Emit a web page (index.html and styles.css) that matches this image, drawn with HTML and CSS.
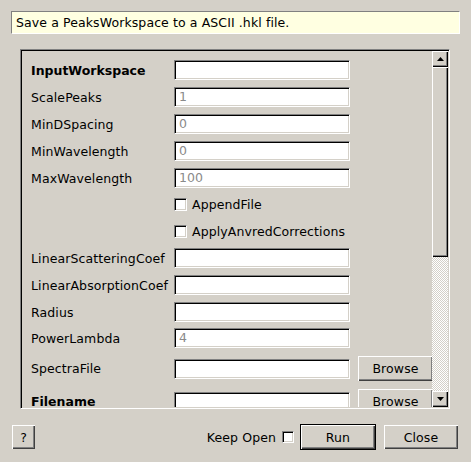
FILE: index.html
```html
<!DOCTYPE html>
<html>
<head>
<meta charset="utf-8">
<link rel="stylesheet" href="styles.css">
</head>
<body>
<div class="dialog">
  <div class="desc">Save a PeaksWorkspace to a ASCII .hkl file.</div>
  <div class="scrollframe">
    <div class="viewport">
      <div class="form">
        <div class="row"><div class="lbl bold">InputWorkspace</div><div class="input"></div></div>
        <div class="row"><div class="lbl">ScalePeaks</div><div class="input">1</div></div>
        <div class="row"><div class="lbl">MinDSpacing</div><div class="input">0</div></div>
        <div class="row"><div class="lbl">MinWavelength</div><div class="input">0</div></div>
        <div class="row"><div class="lbl">MaxWavelength</div><div class="input">100</div></div>
        <div class="row check g6"><div class="cb"></div><span class="cbtext">AppendFile</span></div>
        <div class="row check"><div class="cb"></div><span class="cbtext">ApplyAnvredCorrections</span></div>
        <div class="row"><div class="lbl">LinearScatteringCoef</div><div class="input"></div></div>
        <div class="row"><div class="lbl">LinearAbsorptionCoef</div><div class="input"></div></div>
        <div class="row"><div class="lbl">Radius</div><div class="input"></div></div>
        <div class="row g6"><div class="lbl">PowerLambda</div><div class="input">4</div></div>
        <div class="row tall g8"><div class="lbl">SpectraFile</div><div class="input"></div><div class="btn browse">Browse</div></div>
        <div class="row tall g8"><div class="lbl bold">Filename</div><div class="input"></div><div class="btn browse">Browse</div></div>
      </div>
    </div>
    <div class="vscroll">
      <div class="sbtn"><svg width="7" height="4" viewBox="0 0 7 4"><polygon points="0,4 3.5,0 7,4" fill="#000"/></svg></div>
      <div class="thumb"></div>
      <div class="trough"></div>
      <div class="sbtn"><svg width="7" height="4" viewBox="0 0 7 4"><polygon points="0,0 7,0 3.5,4" fill="#000"/></svg></div>
    </div>
  </div>
  <div class="bottombar">
    <div class="btn help">?</div>
    <div class="spacer"></div>
    <span class="keep">Keep Open</span>
    <div class="cb small"></div>
    <div class="btn run">Run</div>
    <div class="btn close">Close</div>
  </div>
</div>
</body>
</html>
```
FILE: styles.css
```css
body {
  margin: 0;
  background: #d4d0c8;
  font-family: "DejaVu Sans", sans-serif;
  font-size: 12.5px;
  letter-spacing: 0.1px;
  color: #000;
}
.dialog {
  width: 471px;
  height: 462px;
  box-sizing: border-box;
  padding: 11px 11px 0 11px;
  overflow: hidden;
}
.desc {
  height: 23px;
  box-sizing: border-box;
  background: #ffffe1;
  border-top: 1px solid #808080;
  border-left: 1px solid #808080;
  border-right: 1px solid #fff;
  border-bottom: 1px solid #fff;
  padding-left: 4px;
  line-height: 21px;
  white-space: nowrap;
}
.scrollframe {
  margin: 15px 0 0 9px;
  width: 430px;
  height: 360px;
  box-sizing: border-box;
  display: flex;
  border-top: 1px solid #808080;
  border-left: 1px solid #808080;
  border-right: 1px solid #fff;
  border-bottom: 1px solid #fff;
  box-shadow: inset 1px 1px #000, inset -1px -1px #d4d0c8;
  padding: 1px;
}
.viewport {
  flex: 1;
  overflow: hidden;
}
.form {
  padding: 9px 0 0 9px;
}
.row {
  display: flex;
  align-items: center;
  height: 20px;
  margin-top: 7px;
}
.row:first-child { margin-top: 0; }
.row.g6 { margin-top: 6px; }
.row.g8 { margin-top: 8px; }
.row.tall { height: 25px; }
.row.check { padding-left: 143px; }
.lbl {
  width: 143px;
  flex: none;
  white-space: nowrap;
}
.bold { font-weight: bold; letter-spacing: 0; }
.input {
  width: 176px;
  height: 20px;
  flex: none;
  box-sizing: border-box;
  background: #fff;
  border-top: 1px solid #808080;
  border-left: 1px solid #808080;
  border-right: 1px solid #fff;
  border-bottom: 1px solid #fff;
  box-shadow: inset 1px 1px #000, inset -1px -1px #d4d0c8;
  padding-left: 4px;
  line-height: 18px;
  color: #8a8a8a;
}
.cb {
  width: 13px;
  height: 13px;
  flex: none;
  box-sizing: border-box;
  background: #fff;
  border-top: 1px solid #808080;
  border-left: 1px solid #808080;
  border-right: 1px solid #fff;
  border-bottom: 1px solid #fff;
  box-shadow: inset 1px 1px #000, inset -1px -1px #d4d0c8;
}
.cb.small { width: 12px; height: 12px; }
.cbtext { margin-left: 5px; white-space: nowrap; }
.btn {
  box-sizing: border-box;
  background: #d4d0c8;
  box-shadow: inset 1px 1px #fff, inset -1px -1px #404040, inset -2px -2px #808080;
  display: flex;
  align-items: center;
  justify-content: center;
  flex: none;
}
.browse {
  width: 75px;
  height: 25px;
  margin-left: 8px;
}
.vscroll {
  width: 16px;
  display: flex;
  flex-direction: column;
}
.sbtn {
  height: 16px;
  flex: none;
  background: #d4d0c8;
  box-shadow: inset 1px 1px #fff, inset -1px -1px #000, inset -2px -2px #808080;
  display: flex;
  align-items: center;
  justify-content: center;
}
.sbtn svg { display: block; }
.thumb {
  height: 190px;
  flex: none;
  background: #d4d0c8;
  box-shadow: inset 1px 1px #fff, inset -1px -1px #000, inset -2px -2px #808080;
}
.trough {
  flex: 1;
  background: repeating-conic-gradient(#d4d0c8 0 25%, #fff 0 50%) 0 0 / 2px 2px;
}
.bottombar {
  display: flex;
  align-items: center;
  height: 26px;
  margin: 15px 2px 0 1px;
}
.help { width: 23px; height: 24px; }
.spacer { flex: 1; }
.keep { margin-right: 6px; white-space: nowrap; }
.run {
  width: 76px;
  height: 26px;
  margin-left: 6px;
  border: 1px solid #000;
}
.close {
  width: 74px;
  height: 24px;
  margin-left: 8px;
}
```
